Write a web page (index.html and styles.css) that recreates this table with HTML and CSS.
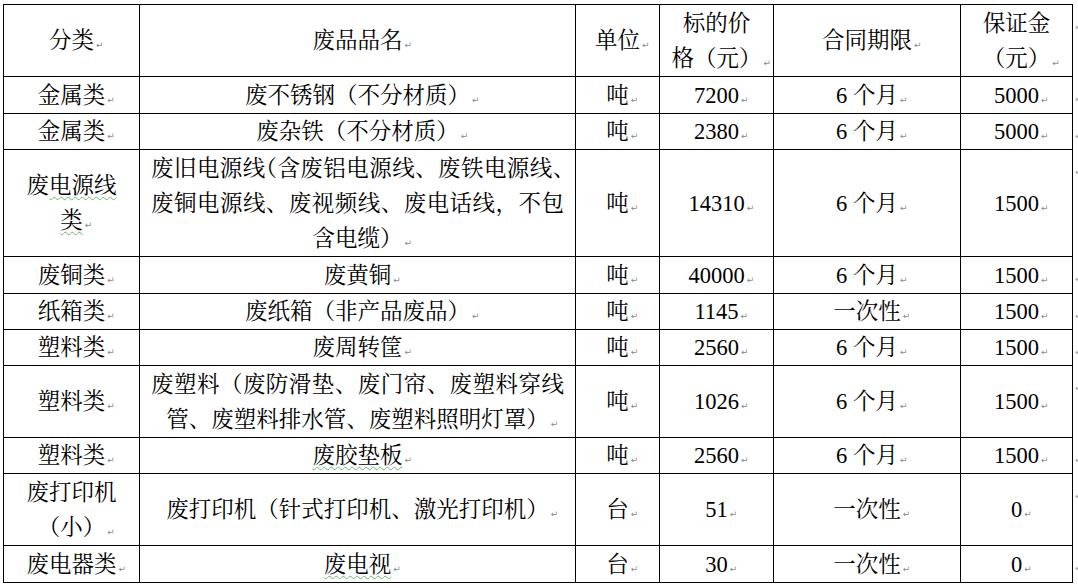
FILE: index.html
```html
<!DOCTYPE html>
<html lang="zh-CN">
<head>
<meta charset="utf-8">
<title>废品品名与价格</title>
<link rel="stylesheet" href="styles.css">
</head>
<body>
<main class="page">
  <div class="sheet">
    <div class="cell"><p>分类<span class="pm">↵</span></p></div>
    <div class="cell"><p>废品品名<span class="pm">↵</span></p></div>
    <div class="cell"><p>单位<span class="pm">↵</span></p></div>
    <div class="cell"><p><span class="ln">标的价</span><span class="ln">格（元）<span class="pm">↵</span></span></p></div>
    <div class="cell"><p>合同期限<span class="pm">↵</span></p></div>
    <div class="cell"><p><span class="ln">保证金</span><span class="ln">（元）<span class="pm">↵</span></span></p></div>

    <div class="cell"><p>金属类<span class="pm">↵</span></p></div>
    <div class="cell"><p>废不锈钢（不分材质）<span class="pm">↵</span></p></div>
    <div class="cell"><p>吨<span class="pm">↵</span></p></div>
    <div class="cell"><p>7200<span class="pm">↵</span></p></div>
    <div class="cell"><p>6 个月<span class="pm">↵</span></p></div>
    <div class="cell"><p>5000<span class="pm">↵</span></p></div>

    <div class="cell"><p>金属类<span class="pm">↵</span></p></div>
    <div class="cell"><p>废杂铁（不分材质）<span class="pm">↵</span></p></div>
    <div class="cell"><p>吨<span class="pm">↵</span></p></div>
    <div class="cell"><p>2380<span class="pm">↵</span></p></div>
    <div class="cell"><p>6 个月<span class="pm">↵</span></p></div>
    <div class="cell"><p>5000<span class="pm">↵</span></p></div>

    <div class="cell"><p><span class="ln">废<span class="gw">电源线</span></span><span class="ln"><span class="gw">类</span><span class="pm">↵</span></span></p></div>
    <div class="cell"><p><span class="ln j">废旧电源线<span class="half">（</span>含废铝电源线、废铁电源线<span class="half">、</span></span><span class="ln j">废铜电源线、废视频线、废电话线，不包</span><span class="ln">含电缆）<span class="pm">↵</span></span></p></div>
    <div class="cell"><p>吨<span class="pm">↵</span></p></div>
    <div class="cell"><p>14310<span class="pm">↵</span></p></div>
    <div class="cell"><p>6 个月<span class="pm">↵</span></p></div>
    <div class="cell"><p>1500<span class="pm">↵</span></p></div>

    <div class="cell"><p>废铜类<span class="pm">↵</span></p></div>
    <div class="cell"><p>废黄铜<span class="pm">↵</span></p></div>
    <div class="cell"><p>吨<span class="pm">↵</span></p></div>
    <div class="cell"><p>40000<span class="pm">↵</span></p></div>
    <div class="cell"><p>6 个月<span class="pm">↵</span></p></div>
    <div class="cell"><p>1500<span class="pm">↵</span></p></div>

    <div class="cell"><p>纸箱类<span class="pm">↵</span></p></div>
    <div class="cell"><p>废纸箱（非产品废品）<span class="pm">↵</span></p></div>
    <div class="cell"><p>吨<span class="pm">↵</span></p></div>
    <div class="cell"><p>1145<span class="pm">↵</span></p></div>
    <div class="cell"><p>一次性<span class="pm">↵</span></p></div>
    <div class="cell"><p>1500<span class="pm">↵</span></p></div>

    <div class="cell"><p>塑料类<span class="pm">↵</span></p></div>
    <div class="cell"><p>废周转筐<span class="pm">↵</span></p></div>
    <div class="cell"><p>吨<span class="pm">↵</span></p></div>
    <div class="cell"><p>2560<span class="pm">↵</span></p></div>
    <div class="cell"><p>6 个月<span class="pm">↵</span></p></div>
    <div class="cell"><p>1500<span class="pm">↵</span></p></div>

    <div class="cell"><p>塑料类<span class="pm">↵</span></p></div>
    <div class="cell"><p><span class="ln j">废塑料（废防滑垫、废门帘、废塑料穿线</span><span class="ln">管、废塑料排水管、废塑料照明灯罩）<span class="pm">↵</span></span></p></div>
    <div class="cell"><p>吨<span class="pm">↵</span></p></div>
    <div class="cell"><p>1026<span class="pm">↵</span></p></div>
    <div class="cell"><p>6 个月<span class="pm">↵</span></p></div>
    <div class="cell"><p>1500<span class="pm">↵</span></p></div>

    <div class="cell"><p>塑料类<span class="pm">↵</span></p></div>
    <div class="cell"><p><span class="gw">废胶垫板</span><span class="pm">↵</span></p></div>
    <div class="cell"><p>吨<span class="pm">↵</span></p></div>
    <div class="cell"><p>2560<span class="pm">↵</span></p></div>
    <div class="cell"><p>6 个月<span class="pm">↵</span></p></div>
    <div class="cell"><p>1500<span class="pm">↵</span></p></div>

    <div class="cell"><p><span class="ln">废打印机</span><span class="ln">（小）<span class="pm">↵</span></span></p></div>
    <div class="cell"><p>废打印机（针式打印机、激光打印机）<span class="pm">↵</span></p></div>
    <div class="cell"><p>台<span class="pm">↵</span></p></div>
    <div class="cell"><p>51<span class="pm">↵</span></p></div>
    <div class="cell"><p>一次性<span class="pm">↵</span></p></div>
    <div class="cell"><p>0<span class="pm">↵</span></p></div>

    <div class="cell"><p>废电器类<span class="pm">↵</span></p></div>
    <div class="cell"><p><span class="gw">废电视</span><span class="pm">↵</span></p></div>
    <div class="cell"><p>台<span class="pm">↵</span></p></div>
    <div class="cell"><p>30<span class="pm">↵</span></p></div>
    <div class="cell"><p>一次性<span class="pm">↵</span></p></div>
    <div class="cell"><p>0<span class="pm">↵</span></p></div>
  </div>
  <div class="ends" aria-hidden="true">
    <div><span class="pm end">↵</span></div>
    <div><span class="pm end">↵</span></div>
    <div><span class="pm end">↵</span></div>
    <div><span class="pm end">↵</span></div>
    <div><span class="pm end">↵</span></div>
    <div><span class="pm end">↵</span></div>
    <div><span class="pm end">↵</span></div>
    <div><span class="pm end">↵</span></div>
    <div><span class="pm end">↵</span></div>
    <div><span class="pm end">↵</span></div>
    <div><span class="pm end">↵</span></div>
  </div>
</main>
</body>
</html>
```

FILE: styles.css
```css
html, body {
  margin: 0;
  padding: 0;
  background: #ffffff;
}

body {
  color: #000000;
  font-family: "Liberation Serif", "Noto Serif CJK SC", "Noto Sans CJK SC", serif;
  font-size: 22.5px;
  line-height: 35px;
}

.page {
  display: flex;
  align-items: flex-start;
  margin: 4px 0 0 3px;
  overflow: hidden;
}

.sheet {
  display: grid;
  grid-template-columns: 135px 435px 83px 113px 186px 111px;
  grid-template-rows: 71px 36px 35px 106px 36px 35px 35px 71px 35px 71px 36px;
  gap: 1px;
  padding: 1px;
  background: #000000;
  flex: none;
}

.cell {
  background: #ffffff;
  display: flex;
  align-items: center;
  padding: 0 4px;
  min-width: 0;
}

.cell:nth-child(6n+1) {
  padding: 0 16px;
}

.cell:nth-child(6n+2) {
  padding: 0 11px;
}

.cell p {
  margin: 0;
  width: 100%;
  text-align: center;
}

.ln {
  display: block;
  white-space: nowrap;
}

.ln.j {
  text-align: justify;
  text-align-last: justify;
}

.half {
  font-feature-settings: "halt" 1;
}

.pm {
  display: inline-block;
  width: 0;
  text-indent: 2px;
  white-space: nowrap;
  font-family: "DejaVu Sans", sans-serif;
  font-size: 9px;
  line-height: 1;
  color: #8a8a8a;
}

.gw {
  text-decoration: underline wavy #6cb86c;
  text-decoration-thickness: 1px;
  text-underline-offset: 3px;
}

.ends {
  display: grid;
  grid-template-rows: 71px 36px 35px 106px 36px 35px 35px 71px 35px 71px 36px;
  row-gap: 1px;
  padding-top: 1px;
  margin-left: 2px;
  flex: none;
  width: 6px;
}

.pm.end {
  text-indent: 0;
  color: #a0a0a0;
}
```
